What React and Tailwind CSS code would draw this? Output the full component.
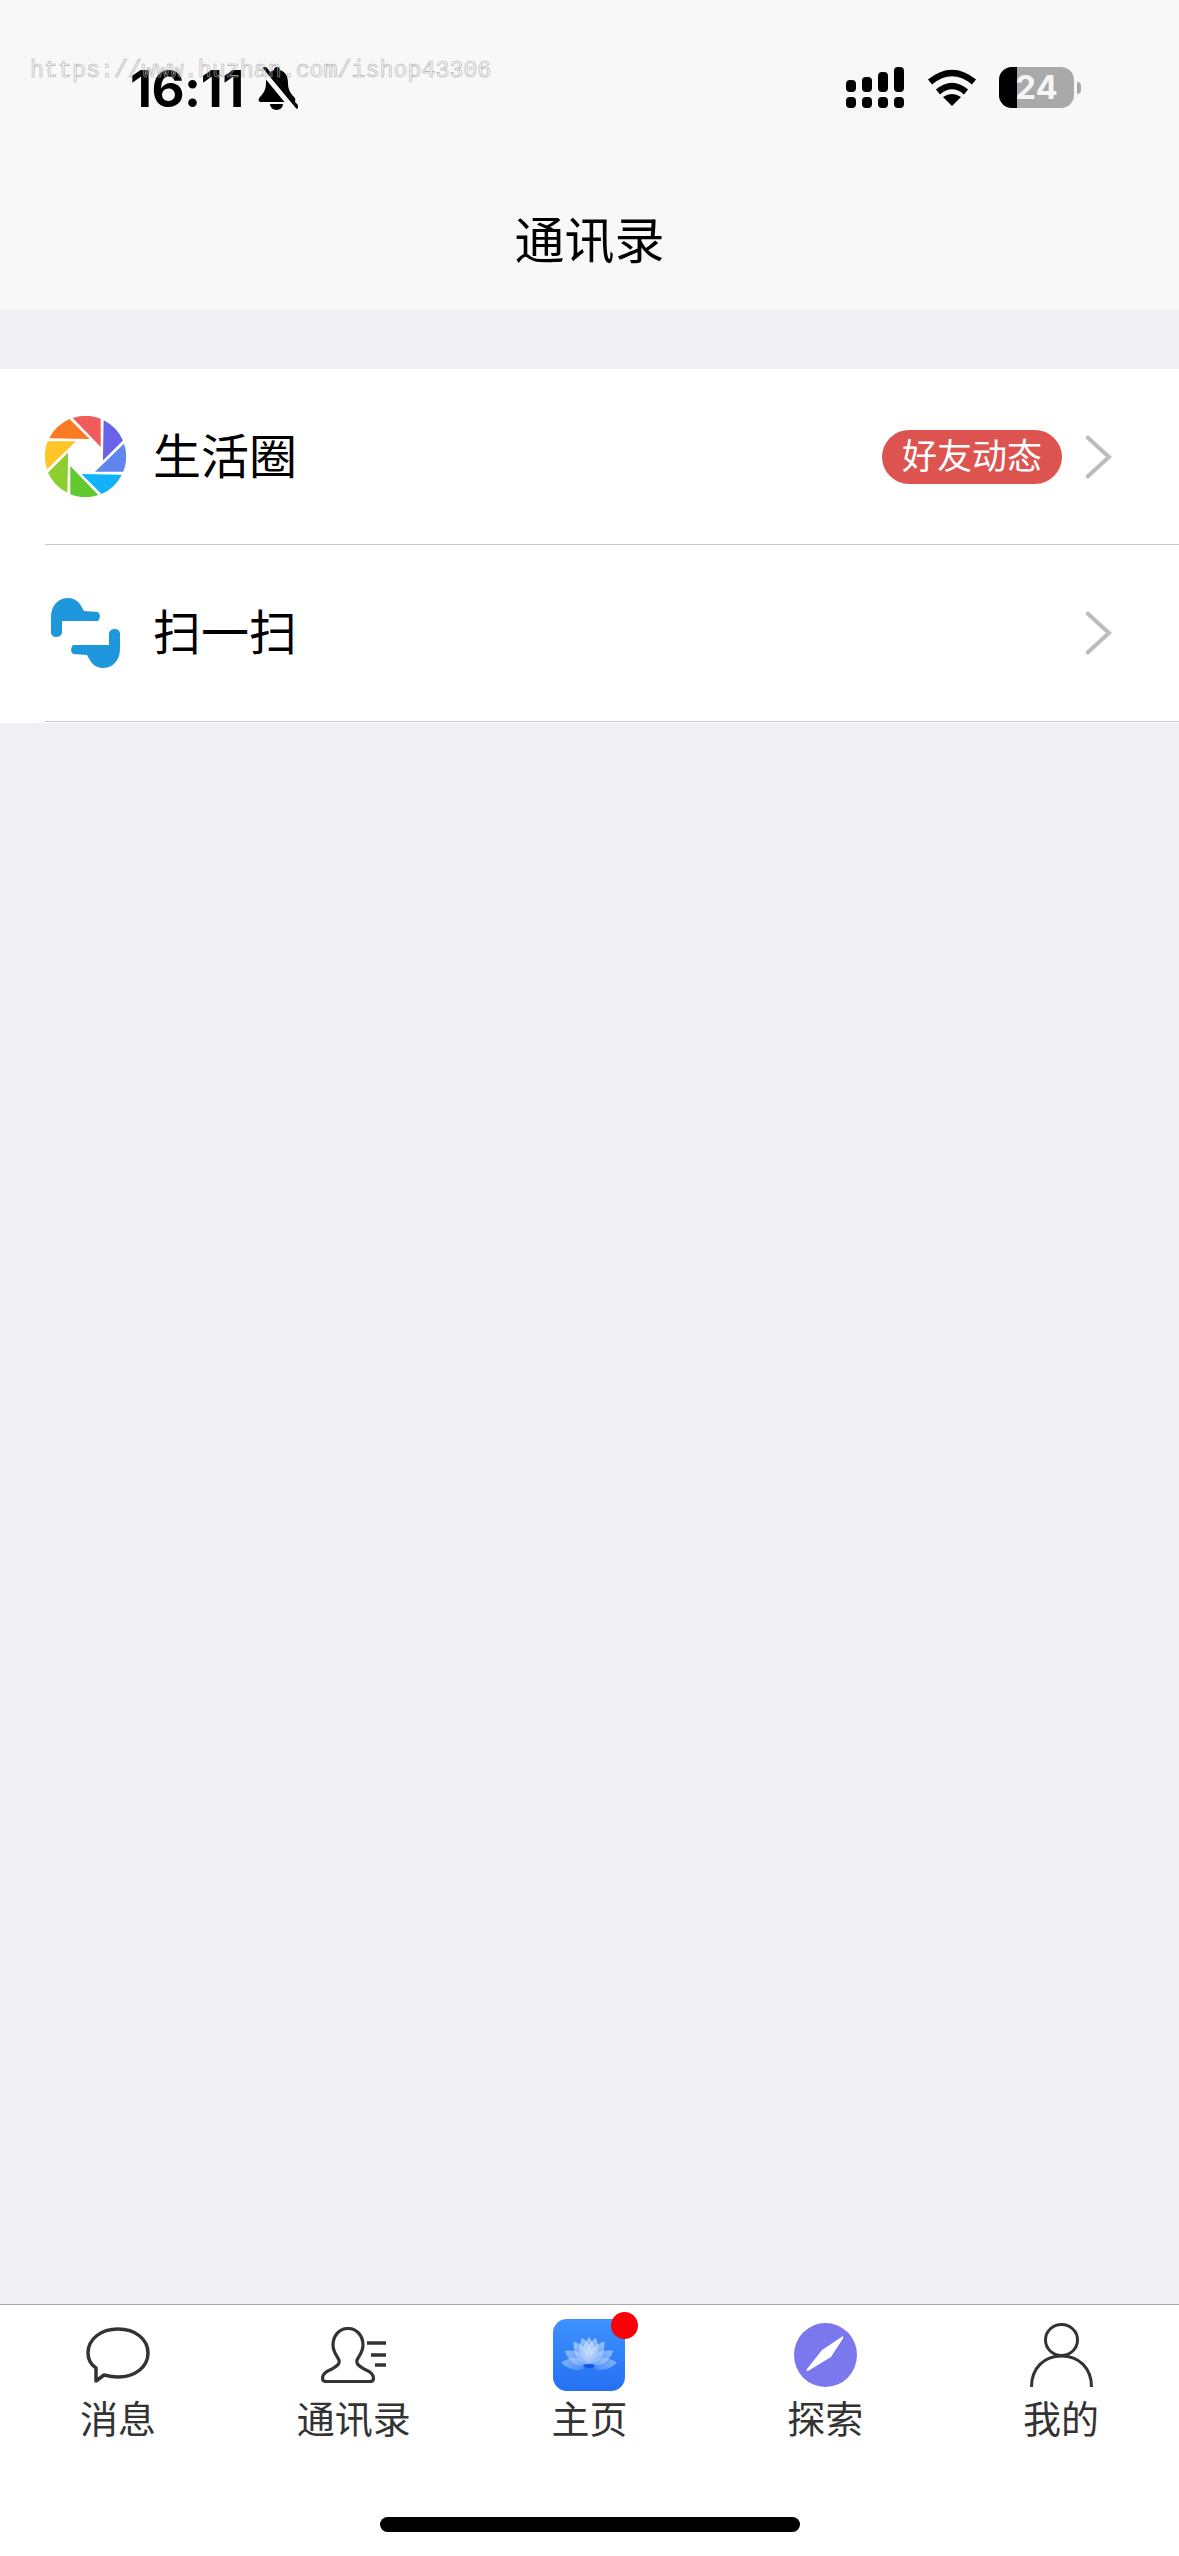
const cjk = "font-['Inter','Noto_Sans_CJK_SC',sans-serif]";

function BellSlash() {
  return (
    <svg width="40" height="43" viewBox="0 0 40 43" className="ml-[14px] shrink-0">
      <path fill="#000" d="M19 0c-2 0-3 1-3 3C10 5 8 10 8 16c0 7-3 11-6 14-2 2-2 5 1 5h32c3 0 3-3 1-5-3-3-6-7-6-14 0-6-2-11-8-13 0-2-1-3-3-3z" />
      <path fill="#000" d="M12 37h13c0 3-3 6-6.500 6S12 40 12 37z" />
      <path stroke="#f8f8f8" strokeWidth="8" d="M3 0l36 44" />
      <path stroke="#000" strokeWidth="3.500" d="M6 0l34 41" />
    </svg>
  );
}

function Signal() {
  return (
    <svg width="58" height="41" viewBox="0 0 58 41" fill="#000">
      <rect x="0" y="30" width="10" height="11" rx="4" />
      <rect x="16" y="30" width="10" height="11" rx="4" />
      <rect x="32" y="30" width="10" height="11" rx="4" />
      <rect x="48" y="30" width="10" height="11" rx="4" />
      <rect x="0" y="13" width="10" height="12" rx="4" />
      <rect x="16" y="10" width="10" height="15" rx="4" />
      <rect x="32" y="5" width="10" height="20" rx="4" />
      <rect x="48" y="0" width="10" height="25" rx="4" />
    </svg>
  );
}

function Wifi() {
  return (
    <svg width="50" height="37" viewBox="0 0 50 37" fill="none">
      <path stroke="#000" strokeWidth="6.500" d="M3 13Q25-5 47 13" />
      <path stroke="#000" strokeWidth="6.500" d="M11 23Q25 11 39 23" />
      <path fill="#000" d="M25 37 16 28Q25 22 34 28Z" />
    </svg>
  );
}

function Battery() {
  return (
    <div className="flex items-center gap-[3px]">
      <div className="relative flex h-[41px] w-[75px] overflow-hidden rounded-[13px] bg-[#a9a9a9]">
        <div className="h-full w-[18px] bg-black" />
        <span className="absolute inset-0 flex items-center justify-center font-['Inter',sans-serif] text-[33px] font-bold leading-none text-[#f5f5f5]">24</span>
      </div>
      <div className="h-[12px] w-[4px] rounded-r-full bg-[#a9a9a9]" />
    </div>
  );
}

function Chevron() {
  return (
    <svg width="27" height="44" viewBox="0 0 27 44" fill="none">
      <path d="M1.500 1.500 24 22 1.500 42.500" stroke="#bcbcbc" strokeWidth="4" />
    </svg>
  );
}

function Aperture() {
  const colors = ["#f25b5c", "#6a62e8", "#5f86ee", "#12b2fb", "#62c92e", "#8dcf2f", "#fdc526", "#fb7a25"];
  return (
    <svg width="81" height="81" viewBox="30 30 240 240" className="blur-[0.6px]">
      {colors.map((c, i) => (
        <path key={c} fill={c} transform={`rotate(${45 * i} 150 150)`} d="M112 36A120 120 0 0 1 195 38L195 122Z" />
      ))}
    </svg>
  );
}

function Scan() {
  const d = "M51 634V618C51 606 59 599 68 599C76 599 80 604 84 612L98 613Q102 617 98 622L62 622V634Q61 638 56 638Q52 638 51 634Z";
  return (
    <svg width="71" height="70" viewBox="50 599 71 70" fill="#1e97dc" className="ml-[5px] blur-[0.6px]">
      <path d={d} />
      <path d={d} transform="rotate(180 85.500 634)" />
    </svg>
  );
}

function Row({ icon, label, children, height }) {
  return (
    <div className={`flex items-center pl-[45px] ${height}`}>
      <div className="flex h-full flex-1 items-center border-b border-[#c8c8ca]">
        <div className="flex w-[108px] items-center">{icon}</div>
        <span className="flex-1 text-[48px] leading-none text-black">{label}</span>
        {children}
        <div className="ml-[23px] mr-[67px]"><Chevron /></div>
      </div>
    </div>
  );
}

function Bubble() {
  return (
    <svg width="64" height="56" viewBox="0 0 64 56" fill="none" stroke="#333" strokeWidth="3.500" strokeLinejoin="round">
      <path d="M10 41C4 37 2 32 2 26 2 12 15 2 32 2s30 10 30 24-13 24-30 24c-5 0-10-1-14-2l-8 6z" />
    </svg>
  );
}

function Contacts() {
  return (
    <svg width="66" height="56" viewBox="0 0 66 56" fill="none" stroke="#333" strokeWidth="3.200">
      <path strokeLinejoin="round" d="M27 1.500C18 1.500 12 9 12 18c0 7 4 11 6 15 1 4-2 6-7 9-5 2-9.500 5-9.500 9 0 3 1.500 3.500 3.500 3.500h44c2 0 3.500-.5 3.500-3.500 0-4-4.500-7-9.500-9-5-3-8-5-7-9 2-4 6-8 6-15 0-9-6-16.500-15-16.500z" />
      <path strokeWidth="3.500" d="M46 16h19M50 28h15M54 38h11" />
    </svg>
  );
}

function Lotus() {
  const petals = [
    { a: -85, o: 0.8 },
    { a: 85, o: 0.8 },
    { a: -60, o: 0.9 },
    { a: 60, o: 0.9 },
    { a: -33, o: 1 },
    { a: 33, o: 1 },
    { a: -14, o: 1 },
    { a: 14, o: 1 },
    { a: 0, o: 1 },
  ];
  return (
    <svg width="72" height="72" viewBox="0 0 72 72" className="rounded-[14px]">
      <defs>
        <linearGradient id="lotusBg" x1="0" y1="0" x2="0" y2="1">
          <stop offset="0" stopColor="#3e92ff" />
          <stop offset="1" stopColor="#2470f2" />
        </linearGradient>
        <linearGradient id="petal" x1="0.500" y1="1" x2="0.500" y2="0">
          <stop offset="0" stopColor="#ffffff" stopOpacity="0.12" />
          <stop offset="1" stopColor="#ffffff" stopOpacity="0.5" />
        </linearGradient>
      </defs>
      <rect width="72" height="72" fill="url(#lotusBg)" />
      {petals.map((p) => (
        <path
          key={p.a}
          fill="url(#petal)"
          opacity={p.o}
          transform={`rotate(${p.a} 36 46)`}
          d="M36 46C28 38 28 28 36 18C44 28 44 38 36 46Z"
        />
      ))}
      <ellipse cx="36" cy="47" rx="6" ry="2" fill="#1257e8" />
    </svg>
  );
}

function Compass() {
  return (
    <svg width="63" height="64" viewBox="0 0 63 64">
      <ellipse cx="31.500" cy="32" rx="31.500" ry="32" fill="#7a78ec" />
      <path fill="#fff" d="M49 13Q50 15 48 17L37 34 14 48Q12 48 13 46L28 27z" />
    </svg>
  );
}

function Person() {
  return (
    <svg width="63" height="64" viewBox="0 0 63 64" fill="none" stroke="#333" strokeWidth="3">
      <ellipse cx="31.500" cy="17" rx="16" ry="15.500" />
      <path d="M1.500 64C1.500 45 14 33 31.500 33S61.500 45 61.500 64" />
    </svg>
  );
}

function Tab({ icon, label }) {
  return (
    <div className="flex flex-col items-center">
      <div className="relative flex h-[100px] items-center justify-center">{icon}</div>
      <span className="h-[28px] text-[38px] leading-[28px] text-[#333]">{label}</span>
    </div>
  );
}

export default function App() {
  return (
    <div className={`relative flex h-[2556px] w-[1179px] flex-col overflow-hidden bg-[#efeff4] ${cjk}`}>
      <header className="flex h-[310px] flex-col bg-[#f8f8f8]">
        <div className="flex h-[205px] items-start pl-[130px] pr-[98px] pt-[67px]">
          <span className="font-['Inter',sans-serif] text-[51px] font-bold leading-[43px] tracking-[-0.5px] text-black">16:11</span>
          <BellSlash />
          <div className="flex-1" />
          <Signal />
          <div className="ml-[23px] mt-[2px]"><Wifi /></div>
          <div className="ml-[22px]"><Battery /></div>
        </div>
        <h1 className="text-center text-[50px] font-normal leading-[72px] text-black">通讯录</h1>
      </header>

      <main className="flex-1 pt-[59px]">
        <div className="bg-white pb-[1px]">
          <Row icon={<Aperture />} label="生活圈" height="h-[176px]">
            <span className="flex h-[54px] w-[180px] items-center justify-center rounded-full bg-[#dc5350] text-[35px] leading-none text-white">好友动态</span>
          </Row>
          <Row icon={<Scan />} label="扫一扫" height="h-[177px]" />
        </div>
      </main>

      <footer className="border-t border-[#a8a8a8] bg-white">
        <div className="grid grid-cols-5">
          <Tab icon={<Bubble />} label="消息" />
          <Tab icon={<Contacts />} label="通讯录" />
          <Tab
            icon={
              <>
                <Lotus />
                <span className="absolute right-[-13px] top-[7px] h-[27px] w-[27px] rounded-full bg-[#fb0006]" />
              </>
            }
            label="主页"
          />
          <Tab icon={<Compass />} label="探索" />
          <Tab icon={<Person />} label="我的" />
        </div>
        <div className="mx-auto mb-[24px] mt-[84px] h-[15px] w-[420px] rounded-full bg-black" />
      </footer>

      <span className="absolute left-[30px] top-[58px] font-['Liberation_Mono',monospace] text-[23.300px] leading-[26px] text-transparent [-webkit-text-stroke:0.6px_#b0b0b0]">https://www.huzhan.com/ishop43306</span>
    </div>
  );
}
